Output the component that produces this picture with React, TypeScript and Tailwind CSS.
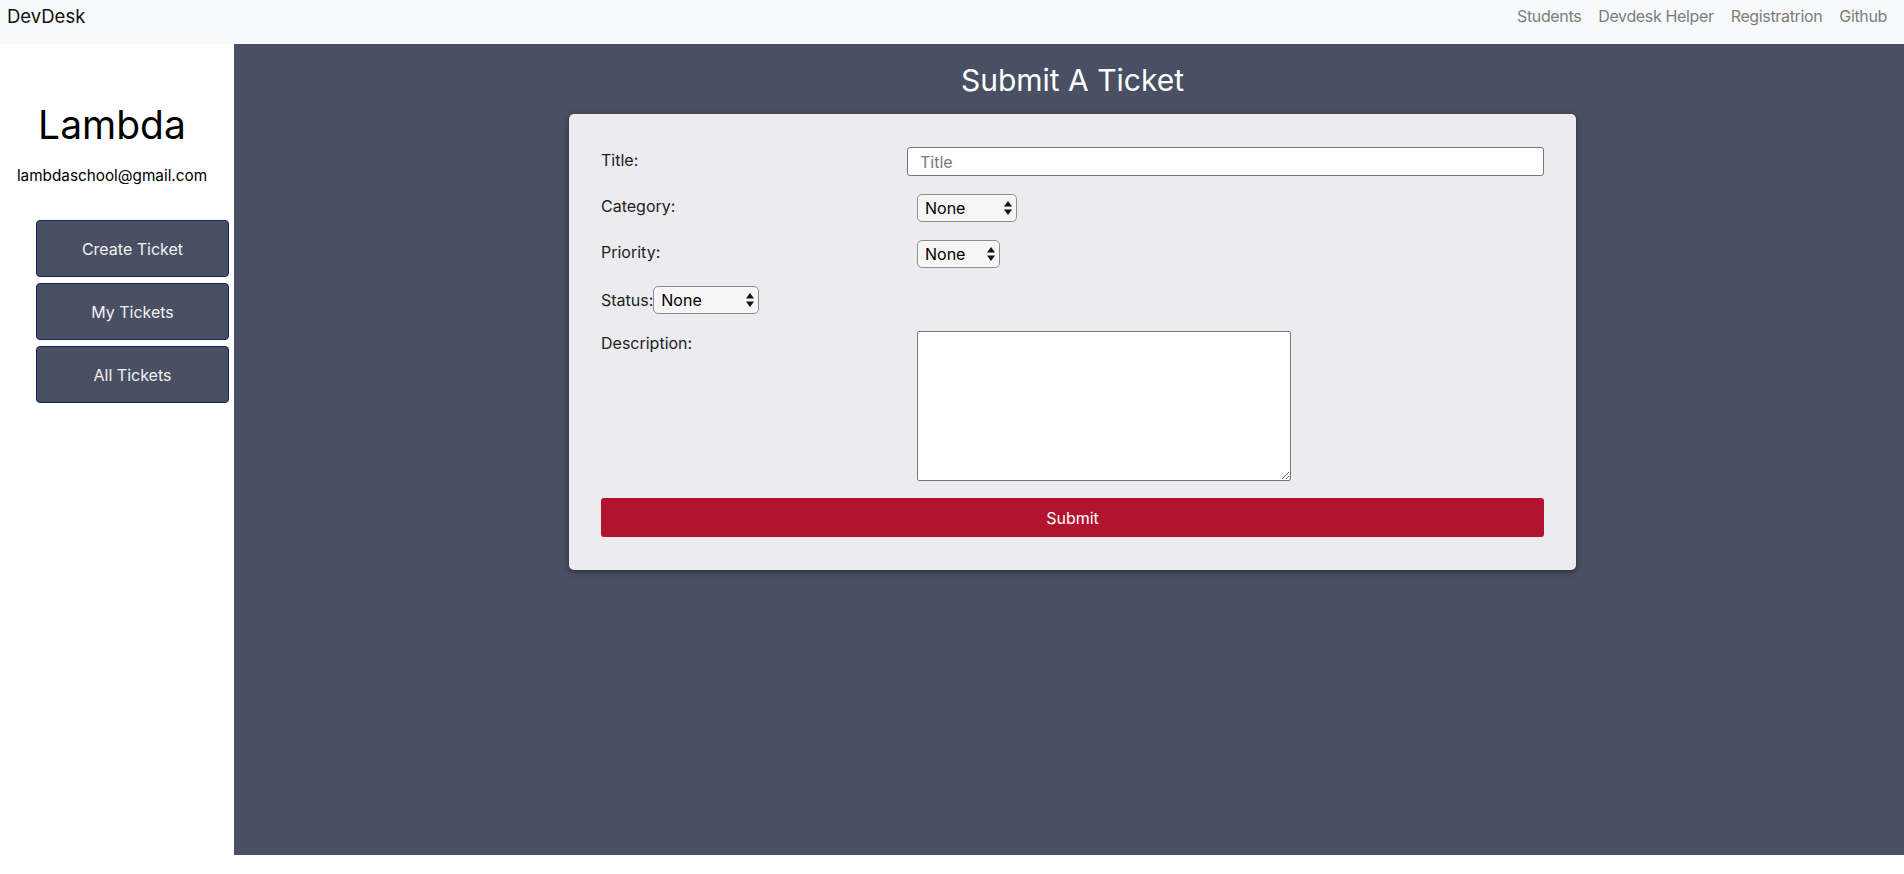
import { useState } from "react";

const navLinks = ["Students", "Devdesk Helper", "Registratrion", "Github"];
const sideButtons = ["Create Ticket", "My Tickets", "All Tickets"];

function SelectBox({ width }: { width: string }) {
  return (
    <div className={`relative h-[28px] ${width}`}>
      <select className="h-full w-full appearance-none rounded-[5px] border border-[#8d8d8d] bg-[#f6f6f6] pl-[7px] text-[16px] text-black outline-none">
        <option>None</option>
      </select>
      <svg className="pointer-events-none absolute right-[5px] top-[7px]" width="8" height="14" viewBox="0 0 8 14">
        <path d="M4 0 L8 5.5 L0 5.5 Z" fill="#111" />
        <path d="M4 14 L8 8.5 L0 8.5 Z" fill="#111" />
      </svg>
    </div>
  );
}

export default function App() {
  const [title, setTitle] = useState("");

  return (
    <div className="min-h-[874px] bg-white font-['Inter','Noto_Sans',sans-serif]">
      {/* Navbar */}
      <nav className="flex h-[44px] items-start justify-between bg-[#f8f9fa] px-[7px]">
        <span className="mt-[1px] text-[18.5px] leading-[30px] text-[#111]">DevDesk</span>
        <div className="mr-[10px] mt-[4px] flex gap-[17px] text-[16px] leading-[24px] tracking-[-0.35px] text-[#7d7d7d]">
          {navLinks.map((l) => (
            <a key={l} className="cursor-pointer">{l}</a>
          ))}
        </div>
      </nav>

      <div className="flex h-[811px]">
        {/* Sidebar */}
        <aside className="w-[234px] shrink-0 bg-white">
          <div className="w-[224px] text-center">
            <h1 className="mt-[56px] text-[39px] leading-[50px] text-black">Lambda</h1>
            <p className="mt-[14px] text-[15.3px] leading-[24px] text-black">lambdaschool@gmail.com</p>
          </div>
          <div className="ml-[36px] mt-[32px] flex w-[193px] flex-col gap-[6px]">
            {sideButtons.map((b) => (
              <button
                key={b}
                className="h-[57px] rounded-[4px] border border-[#142462] bg-[#4a5064] text-[16px] text-[#f1f1f1]"
              >
                {b}
              </button>
            ))}
          </div>
        </aside>

        {/* Main */}
        <main className="flex flex-1 flex-col items-center bg-[#4a5064] pl-[7px]">
          <h2 className="mt-[18px] text-[30px] leading-[36px] text-white">Submit A Ticket</h2>
          <form
            className="mt-[16px] w-[1007px] rounded-[5px] bg-[#ececf0] px-[32px] pb-[33px] pt-[33px] shadow-[0_2px_6px_rgba(0,0,0,0.45)]"
            onSubmit={(e) => e.preventDefault()}
          >
            <div className="flex items-start">
              <label className="w-[306px] pt-[1px] text-[16px] leading-[24px] text-[#222]">Title:</label>
              <input
                value={title}
                onChange={(e) => setTitle(e.target.value)}
                placeholder="Title"
                className="h-[29px] flex-1 rounded-[3px] border border-[#777] bg-white px-[12px] text-[16px] outline-none placeholder:text-[#7a7a7a]"
              />
            </div>

            <div className="mt-[18px] flex items-start">
              <label className="w-[316px] text-[16px] leading-[24px] text-[#222]">Category:</label>
              <SelectBox width="w-[100px]" />
            </div>

            <div className="mt-[18px] flex items-start">
              <label className="w-[316px] text-[16px] leading-[24px] text-[#222]">Priority:</label>
              <SelectBox width="w-[83px]" />
            </div>

            <div className="mt-[18px] flex items-center">
              <label className="text-[16px] leading-[24px] text-[#222]">Status:</label>
              <SelectBox width="w-[106px]" />
            </div>

            <div className="mt-[17px] flex items-start">
              <label className="w-[316px] text-[16px] leading-[24px] text-[#222]">Description:</label>
              <textarea className="h-[150px] w-[374px] rounded-[2px] border border-[#777] bg-white outline-none" />
            </div>

            <button
              type="submit"
              className="mt-[17px] h-[39px] w-full rounded-[3px] bg-[#b21430] text-[16px] text-white"
            >
              Submit
            </button>
          </form>
        </main>
      </div>
    </div>
  );
}
